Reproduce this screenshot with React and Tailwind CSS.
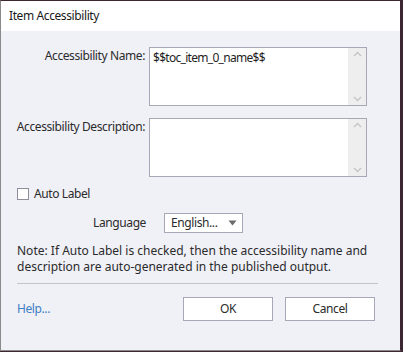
import { useState } from 'react'

function ScrollArea({ value }) {
  return (
    <div className="flex h-[59px] w-[218px] border border-[#a7a7b8] bg-white">
      <div className="flex-1 px-[3px] pt-[1px] text-[12px] tracking-[-0.7px] text-[#1e1e1e]">{value}</div>
      <div className="flex w-[18px] flex-col items-center justify-between bg-[#eeeeee] py-[3px]">
        <svg width="9" height="6" viewBox="0 0 9 6"><path d="M1 5 L4.5 1.5 L8 5" fill="none" stroke="#c4c4c4" strokeWidth="1.3" /></svg>
        <svg width="9" height="6" viewBox="0 0 9 6"><path d="M1 1 L4.5 4.5 L8 1" fill="none" stroke="#c4c4c4" strokeWidth="1.3" /></svg>
      </div>
    </div>
  )
}

export default function App() {
  const [autoLabel, setAutoLabel] = useState(false)

  return (
    <div
      className="h-[352px] w-[403px] bg-[#3b2631]"
      style={{ fontFamily: '"Noto Sans", "Open Sans", sans-serif' }}
    >
      <div className="flex h-[351px] w-[401px] flex-col border-t border-r border-b border-l border-t-[#3b2631] border-r-[#3b2631] border-b-[#8a8a8a] border-l-[#8a8a8a] bg-[#f0f0f7] text-[12px] tracking-[-0.4px] text-[#2b2b2b]">
        <div className="flex h-[30px] items-center bg-white pl-[8px] text-[12px] text-[#1a1a1a]">
          Item Accessibility
        </div>

        <div className="flex flex-col px-[16px]">
          <div className="mt-[16px] flex">
            <div className="flex w-[132px] justify-end whitespace-nowrap pr-[4px] leading-[18px]">Accessibility Name:</div>
            <ScrollArea value="$$toc_item_0_name$$" />
          </div>

          <div className="mt-[12px] flex">
            <div className="flex w-[132px] justify-end whitespace-nowrap pr-[4px] leading-[18px]">Accessibility Description:</div>
            <ScrollArea value="" />
          </div>

          <label className="mt-[8px] flex items-center gap-[5px]">
            <span
              onClick={() => setAutoLabel(!autoLabel)}
              className="h-[12px] w-[12px] border border-[#8f8f9c] bg-white"
            />
            <span>Auto Label</span>
          </label>

          <div className="mt-[10px] flex items-center">
            <div className="w-[132px] pr-[3px] text-right">Language</div>
            <div className="ml-[15px] flex h-[20px] w-[79px] items-center justify-between border border-[#a7a7b8] bg-white pl-[6px] pr-[5px]">
              <span>English...</span>
              <svg width="9" height="6" viewBox="0 0 9 6"><path d="M0.5 0.5 L8.5 0.5 L4.5 5.5 Z" fill="#6b6b6b" /></svg>
            </div>
          </div>

          <p className="mt-[10px] leading-[16px] tracking-normal">
            Note: If Auto Label is checked, then the accessibility name and
            <br />
            description are auto-generated in the published output.
          </p>

          <div className="mt-[8px] mr-[6px] h-px bg-[#c4c4cc]" />

          <div className="mt-[13px] mr-[9px] flex items-center">
            <a className="flex-1 text-[#3c7fc4]">Help...</a>
            <button className="h-[24px] w-[90px] border border-[#a7a7b8] bg-white text-[12px]">OK</button>
            <button className="ml-[12px] h-[24px] w-[90px] border border-[#a7a7b8] bg-white text-[12px]">Cancel</button>
          </div>
        </div>
      </div>
    </div>
  )
}
